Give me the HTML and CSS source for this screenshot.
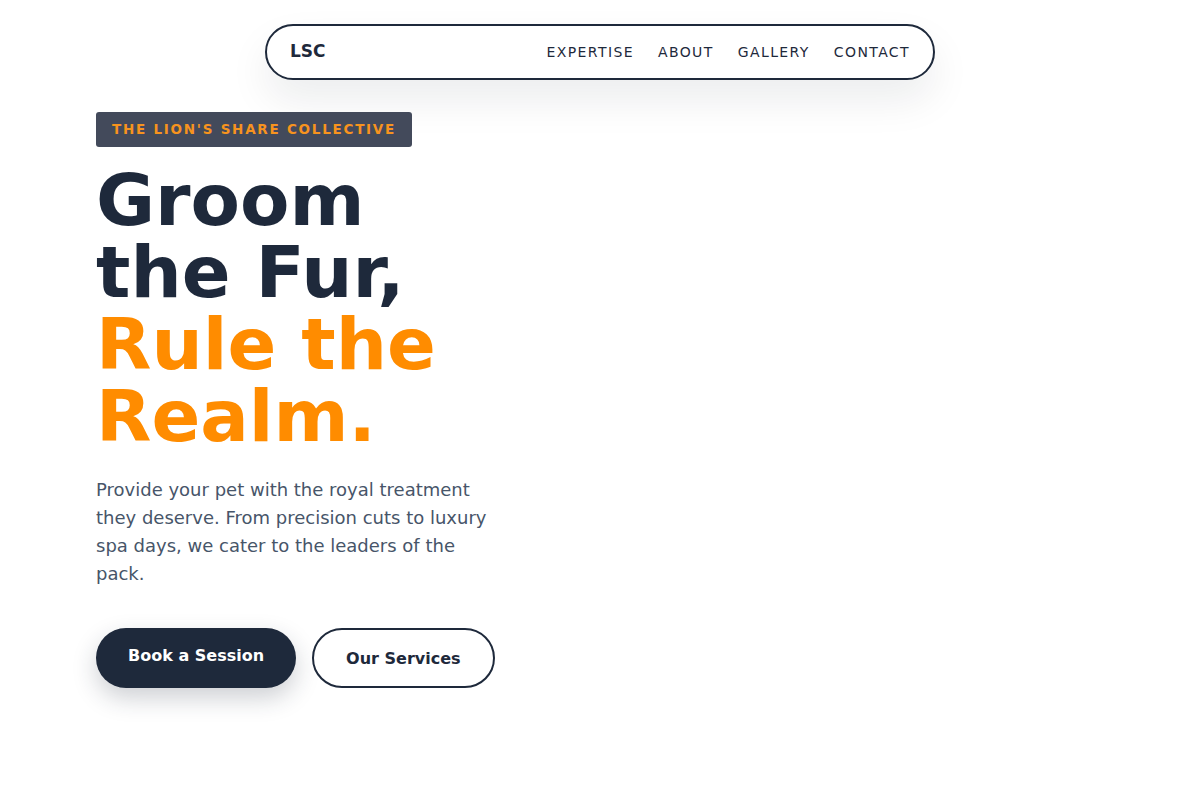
FILE: index.html
```html
<!DOCTYPE html>
<html lang="en">
<head>
<meta charset="utf-8">
<title>LSC</title>
<link rel="stylesheet" href="styles.css">
</head>
<body>
<header class="nav-wrap">
  <nav class="nav">
    <div class="logo">LSC</div>
    <ul class="links">
      <li><a href="#">EXPERTISE</a></li>
      <li><a href="#">ABOUT</a></li>
      <li><a href="#">GALLERY</a></li>
      <li><a href="#">CONTACT</a></li>
    </ul>
  </nav>
</header>
<main class="hero">
  <div class="hero-text">
    <div class="badge">THE LION'S SHARE COLLECTIVE</div>
    <h1 class="title">Groom the Fur, <span class="accent">Rule the Realm.</span></h1>
    <p class="lead">Provide your pet with the royal treatment they deserve. From precision cuts to luxury spa days, we cater to the leaders of the pack.</p>
    <div class="actions">
      <a class="btn btn-primary" href="#">Book a Session</a>
      <a class="btn btn-outline" href="#">Our Services</a>
    </div>
  </div>
</main>
</body>
</html>
```

FILE: styles.css
```css
* { box-sizing: border-box; }
html, body { margin: 0; padding: 0; background: #ffffff; }
body {
  font-family: "DejaVu Sans", "Liberation Sans", sans-serif;
  color: #1e293b;
  min-height: 800px;
}
a { text-decoration: none; color: inherit; }

.nav-wrap {
  padding-top: 24px;
  display: flex;
  justify-content: center;
}
.nav {
  width: 670px;
  height: 56px;
  border: 2px solid #1e293b;
  border-radius: 28px;
  background: #fff;
  display: flex;
  align-items: center;
  justify-content: space-between;
  padding: 0 23px 2px 23px;
  box-shadow: 0 20px 40px rgba(15, 23, 42, 0.08);
}
.logo {
  font-weight: bold;
  font-size: 17px;
}
.links {
  list-style: none;
  margin: 0;
  padding: 0;
  display: flex;
  gap: 24px;
}
.links a {
  font-size: 14px;
  letter-spacing: 1.4px;
  color: #1e293b;
}

.hero {
  padding: 32px 96px 100px;
}
.hero-text {
  width: 420px;
}
.badge {
  display: inline-block;
  background: #434a5b;
  color: #f7931e;
  font-size: 13.5px;
  font-weight: bold;
  letter-spacing: 1.75px;
  padding: 9px 16px;
  line-height: 17px;
  border-radius: 3px;
}
.title {
  margin: 17px 0 0;
  font-size: 72px;
  line-height: 72px;
  font-weight: bold;
  color: #1e293b;
}
.accent { color: #ff8c00; }
.lead {
  margin: 24px 0 0;
  font-size: 18px;
  line-height: 28px;
  color: #475569;
  width: 400px;
}
.actions {
  margin-top: 40px;
  display: flex;
  gap: 16px;
}
.btn {
  display: inline-flex;
  align-items: center;
  justify-content: center;
  height: 60px;
  border-radius: 30px;
  font-size: 16px;
  font-weight: bold;
  padding: 0 32px;
}
.btn-primary {
  background: #1e293b;
  color: #fff;
  padding-bottom: 6px;
  box-shadow: 0 10px 24px rgba(30, 41, 59, 0.22);
}
.btn-outline {
  border: 2px solid #1e293b;
  color: #1e293b;
  background: #fff;
}
```
